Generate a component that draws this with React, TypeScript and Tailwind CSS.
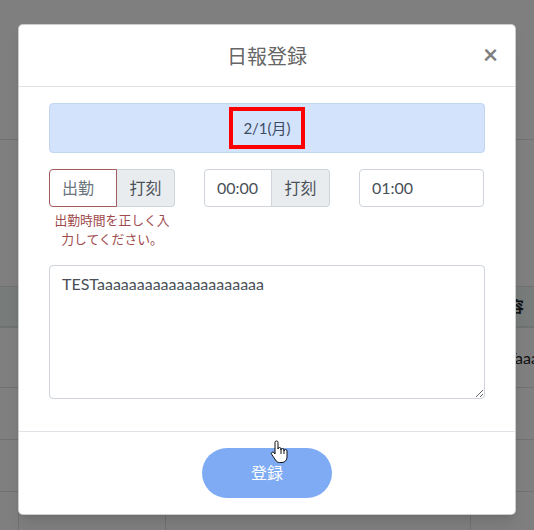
const FONT = "font-['Lato','Noto_Sans_CJK_JP',sans-serif]";

function HandCursor() {
  return (
    <svg width="19" height="24" viewBox="0 0 19 24" className="absolute left-[270px] top-[440px]">
      <path
        d="M5 2.5a1.5 1.5 0 0 1 3 0V9a1.5 1.5 0 0 1 3 0v1a1.5 1.5 0 0 1 3 0v1a1.5 1.5 0 0 1 3 0V17c0 3-2 5.5-5 5.5H9.5c-2 0-3-1-4-2.5L1.6 14.2a1.4 1.4 0 0 1 2.2-1.7L5 14Z"
        fill="#fff"
        stroke="#111"
        strokeWidth="1"
        strokeLinejoin="round"
      />
      <path d="M11 9.5V14M14 10.5V14" stroke="#111" strokeWidth="1" />
    </svg>
  );
}

function BackgroundPage() {
  return (
    <div className="w-[534px] text-[#212529]">
      <div className="h-[140px] border-b border-[#dee2e6]" />
      <div className="h-[146px]" />
      <div className="grid grid-cols-[18px_147px_305px_1fr] border-t border-[#dee2e6]">
        <div className="h-[41px] border-b-2 border-[#dee2e6] bg-[#eef6f4]" />
        <div className="h-[41px] border-b-2 border-l border-[#dee2e6] bg-[#eef6f4]" />
        <div className="h-[41px] border-b-2 border-l border-[#dee2e6] bg-[#eef6f4]" />
        <div className="flex h-[41px] items-center border-b-2 border-l border-[#dee2e6] bg-[#eef6f4] pl-[23px] text-[15px] font-bold whitespace-nowrap">
          内容
        </div>

        <div className="h-[60px] border-b border-[#dee2e6]" />
        <div className="h-[60px] border-b border-l border-[#dee2e6]" />
        <div className="h-[60px] border-b border-l border-[#dee2e6]" />
        <div className="flex h-[60px] items-center overflow-hidden border-b border-l border-[#dee2e6] pl-[9px] text-[16px] whitespace-nowrap">
          TESTaaaaaaaaaaaaaaaaaaaaa
        </div>

        {[0, 1, 2].map((i) => (
          <div key={i} className="contents">
            <div className="h-[52px] border-b border-[#dee2e6]" />
            <div className="h-[52px] border-b border-l border-[#dee2e6]" />
            <div className="h-[52px] border-b border-l border-[#dee2e6]" />
            <div className="h-[52px] border-b border-l border-[#dee2e6]" />
          </div>
        ))}
      </div>
    </div>
  );
}

function InputGroup({ value, invalid }: { value: string; invalid?: boolean }) {
  return (
    <div className="flex h-[38px]">
      <div
        className={
          invalid
            ? "flex w-[68px] items-center rounded-l-[4px] border border-[#a55b5d] px-3 text-[16px] text-[#6c757d]"
            : "flex w-[68px] items-center rounded-l-[4px] border border-[#ced4da] px-3 text-[16px] text-[#495057]"
        }
      >
        {value}
      </div>
      <div className="flex flex-1 items-center justify-center rounded-r-[4px] border border-l-0 border-[#ced4da] bg-[#e9ecef] text-[16px] text-[#495057]">
        打刻
      </div>
    </div>
  );
}

export default function App() {
  return (
    <div className={`relative h-[530px] w-[534px] overflow-hidden bg-white ${FONT}`}>
      <BackgroundPage />

      <div className="absolute inset-0 bg-black/50" />

      <div className="absolute left-[18px] top-[24px] w-[498px] rounded-[5px] border border-black/20 bg-white shadow-lg">
        <div className="relative flex h-[62px] items-center justify-center border-b border-[#dee2e6]">
          <h5 className="text-[20px] leading-[30px] text-[#666]">日報登録</h5>
          <button className="absolute right-[17px] top-[14px] text-[26px] leading-[30px] font-bold text-black opacity-50">
            ×
          </button>
        </div>

        <div className="px-[30px] pt-4 pb-[32px]">
          <div className="flex h-[50px] items-center justify-center rounded-[4px] border border-[#c3d6f0] bg-[#d2e3fb]">
            <span className="inline-block border-4 border-[#ff0000] px-[10px] py-[5px] text-[15px] leading-[24px] text-[#3f4b63]">
              2/1(月)
            </span>
          </div>

          <div className="mt-4 grid grid-cols-[126px_126px_125px] gap-x-[29px]">
            <div>
              <InputGroup value="出勤" invalid />
              <p className="mt-1 text-center text-[12.8px] leading-[19.2px] text-[#a04a4c]">
                出勤時間を正しく入力してください。
              </p>
            </div>
            <div>
              <InputGroup value="00:00" />
            </div>
            <div>
              <div className="flex h-[38px] items-center rounded-[4px] border border-[#ced4da] px-3 text-[16px] text-[#495057]">
                01:00
              </div>
            </div>
          </div>

          <textarea
            className="mt-4 block h-[134px] w-full rounded-[4px] border border-[#ced4da] px-3 py-[6px] text-[16px] leading-[24px] text-[#495057] outline-none"
            defaultValue="TESTaaaaaaaaaaaaaaaaaaaaa"
          />
        </div>

        <div className="flex h-[83px] items-center justify-center border-t border-[#dee2e6]">
          <button className="h-[50px] w-[130px] rounded-full bg-[#7eabf3] text-[16px] text-white">
            登録
          </button>
        </div>
      </div>

      <HandCursor />
    </div>
  );
}
